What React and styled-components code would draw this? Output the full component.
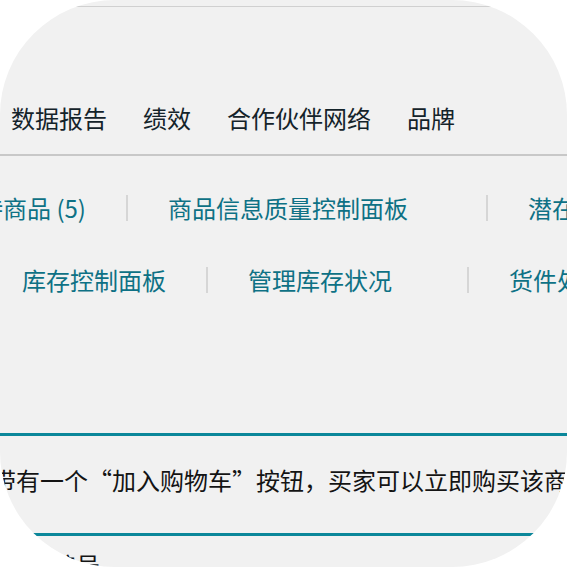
import React from 'react'
import styled, { createGlobalStyle } from 'styled-components'

const GlobalStyle = createGlobalStyle`
  html, body {
    margin: 0;
    padding: 0;
    background: #ffffff;
  }
`;

const Frame = styled.div`
  width: 567px;
  height: 567px;
  border-radius: 115px;
  overflow: hidden;
  background: #f1f1f1;
  display: flex;
  flex-direction: column;
  font-family: "Noto Sans CJK SC", "Noto Sans", sans-serif;
  font-size: 24px;
  white-space: nowrap;
`;

const Rule = styled.div`
  flex: none;
  height: ${p => p.$h || 1}px;
  margin-top: ${p => p.$top || 0}px;
  background: ${p => p.$color || '#d3d3d3'};
`;

const MainNav = styled.nav`
  display: flex;
  gap: 36px;
  padding: 99px 0 24px 11px;
  line-height: 24px;
  color: #14232a;
`;

const NavItem = styled.span`
  flex: none;
`;

const SubNav = styled.div`
  display: flex;
  align-items: center;
  height: 26px;
  margin-top: ${p => p.$top}px;
  margin-left: ${p => p.$left}px;
`;

const Tab = styled.span`
  flex: none;
  line-height: 26px;
  color: #0e7185;
  padding: 0 40px;
  margin-right: ${p => p.$trail || 0}px;
  &:first-child {
    padding-left: 0;
  }
`;

const Sep = styled.span`
  flex: none;
  width: 2px;
  height: 26px;
  background: #d6d6d6;
`;

const Copy = styled.p`
  margin: ${p => p.$top}px 0 0 ${p => p.$left}px;
  line-height: 24px;
  color: #141414;
`;

export default function App() {
  return (
    <>
      <GlobalStyle />
      <Frame>
        <Rule $top={6} $color="#d0d0d0" />
        <MainNav>
          <NavItem>数据报告</NavItem>
          <NavItem>绩效</NavItem>
          <NavItem>合作伙伴网络</NavItem>
          <NavItem>品牌</NavItem>
        </MainNav>
        <Rule $h={2} $color="#c8c8c8" />

        <SubNav $top={39} $left={-21}>
          <Tab>待商品 (5)</Tab>
          <Sep />
          <Tab $trail={38}>商品信息质量控制面板</Tab>
          <Sep />
          <Tab>潜在重复商品</Tab>
        </SubNav>

        <SubNav $top={46} $left={22}>
          <Tab>库存控制面板</Tab>
          <Sep />
          <Tab $trail={35}>管理库存状况</Tab>
          <Sep />
          <Tab>货件处理进度</Tab>
        </SubNav>

        <Rule $top={140} $h={3} $color="#0b879a" />
        <Copy $top={32} $left={-8}>带有一个“加入购物车”按钮，买家可以立即购买该商品。</Copy>
        <Rule $top={41} $h={3} $color="#0b879a" />
        <Copy $top={17} $left={52}>编号</Copy>
      </Frame>
    </>
  )
}
